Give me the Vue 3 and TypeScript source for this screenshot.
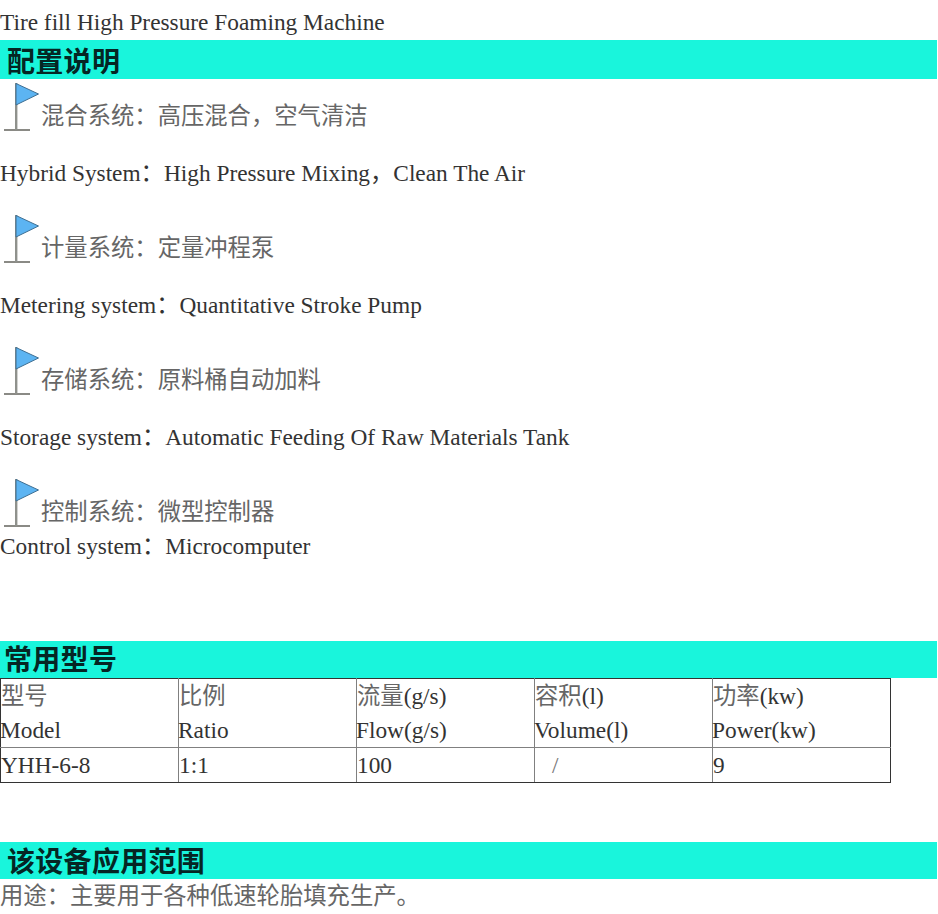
<script setup lang="ts">
interface Feature { cn: string; en: string; tight?: boolean }
const C = '\uFF1A'
const K = '\uFF0C'
const features: Feature[] = [
  { cn: `混合系统${C}高压混合${K}空气清洁`, en: `Hybrid System${C}High Pressure Mixing${K}Clean The Air` },
  { cn: `计量系统${C}定量冲程泵`, en: `Metering system${C}Quantitative Stroke Pump` },
  { cn: `存储系统${C}原料桶自动加料`, en: `Storage system${C}Automatic Feeding Of Raw Materials Tank` },
  { cn: `控制系统${C}微型控制器`, en: `Control system${C}Microcomputer`, tight: true },
]
const columns = [
  { cn: '型号', unit: '', en: 'Model', value: 'YHH-6-8' },
  { cn: '比例', unit: '', en: 'Ratio', value: '1:1' },
  { cn: '流量', unit: '(g/s)', en: 'Flow(g/s)', value: '100' },
  { cn: '容积', unit: '(l)', en: 'Volume(l)', value: ' /' },
  { cn: '功率', unit: '(kw)', en: 'Power(kw)', value: '9' },
]
const usage = `用途${C}主要用于各种低速轮胎填充生产。`
</script>

<template>
  <main class="page">
    <p class="title">Tire fill High Pressure Foaming Machine</p>
    <h2 class="bar first">配置说明</h2>
    <section class="features">
      <div v-for="f in features" :key="f.cn" class="feature" :class="{ tight: f.tight }">
        <div class="flag-line">
          <svg class="flag" width="40" height="50" viewBox="0 0 40 50" aria-hidden="true">
            <rect x="4" y="47" width="26" height="2" fill="#8a8a85" />
            <rect x="15" y="1" width="2.4" height="47" fill="#8f918c" />
            <path d="M16 1.5 L38.5 12 L16 23 Z" fill="#5cb4f2" stroke="#3f6f92" stroke-width="1" />
          </svg>
          <span class="cn">{{ f.cn }}</span>
        </div>
        <p class="en">{{ f.en }}</p>
      </div>
    </section>
    <h2 class="bar second">常用型号</h2>
    <table class="spec">
      <tbody>
        <tr class="head">
          <td v-for="c in columns" :key="c.en">
            <div class="cell-line"><span class="cell-cn">{{ c.cn }}</span>{{ c.unit }}</div>
            <div class="cell-line cell-en">{{ c.en }}</div>
          </td>
        </tr>
        <tr class="body">
          <td v-for="c in columns" :key="c.value" :class="{ slash: c.value.includes('/') }">{{ c.value.trim() }}</td>
        </tr>
      </tbody>
    </table>
    <h2 class="bar third">该设备应用范围</h2>
    <p class="usage">{{ usage }}</p>
  </main>
</template>

<style scoped>
.page {
  width: 938px;
  height: 914px;
  overflow: hidden;
  color: #333;
  font-family: "Liberation Serif", "Noto Sans CJK SC", serif;
  font-size: 23.33px;
  line-height: 32px;
}
p { margin: 0; }
.title { height: 40px; padding-top: 6px; box-sizing: border-box; }
.bar {
  margin: 0;
  width: 937px;
  height: 38px;
  background: #19f5dc;
  color: #052624;
  font-family: "Noto Sans CJK SC", sans-serif;
  font-size: 28px;
  font-weight: 700;
  letter-spacing: 0.3px;
  line-height: 40px;
  padding-left: 7px;
  box-sizing: border-box;
}
.first { height: 39px; }
.features { padding-top: 3px; }
.feature { height: 132px; }
.feature.tight { height: 99px; }
.flag-line { display: flex; height: 50px; align-items: flex-end; }
.flag { display: block; flex: none; }
.cn {
  margin-left: 1px;
  color: #666;
  line-height: 32px;
}
.en { margin-top: 25px; }
.tight .en { margin-top: 2px; }
.second { margin-top: 64px; height: 37px; padding-left: 4px; line-height: 35px; }
.spec {
  width: 891px;
  height: 105px;
  table-layout: fixed;
  border-collapse: collapse;
}
.spec td {
  border: 1px solid #808080;
  padding: 0;
  vertical-align: middle;
}
.spec .head td { height: 68px; border-top-color: #333; }
.spec .body td { border-bottom-color: #333; }
.spec td:first-child { border-left-color: #333; }
.spec td:last-child { border-right-color: #333; }
.cell-line { height: 34px; line-height: 34px; }
.cell-cn { color: #666; }
.cell-en { margin-left: -1px; }
.slash { padding-left: 17px !important; color: #777; }
.third { margin-top: 59px; height: 37px; line-height: 37px; }
.usage { height: 34px; padding-top: 1px; color: #666; }
</style>
